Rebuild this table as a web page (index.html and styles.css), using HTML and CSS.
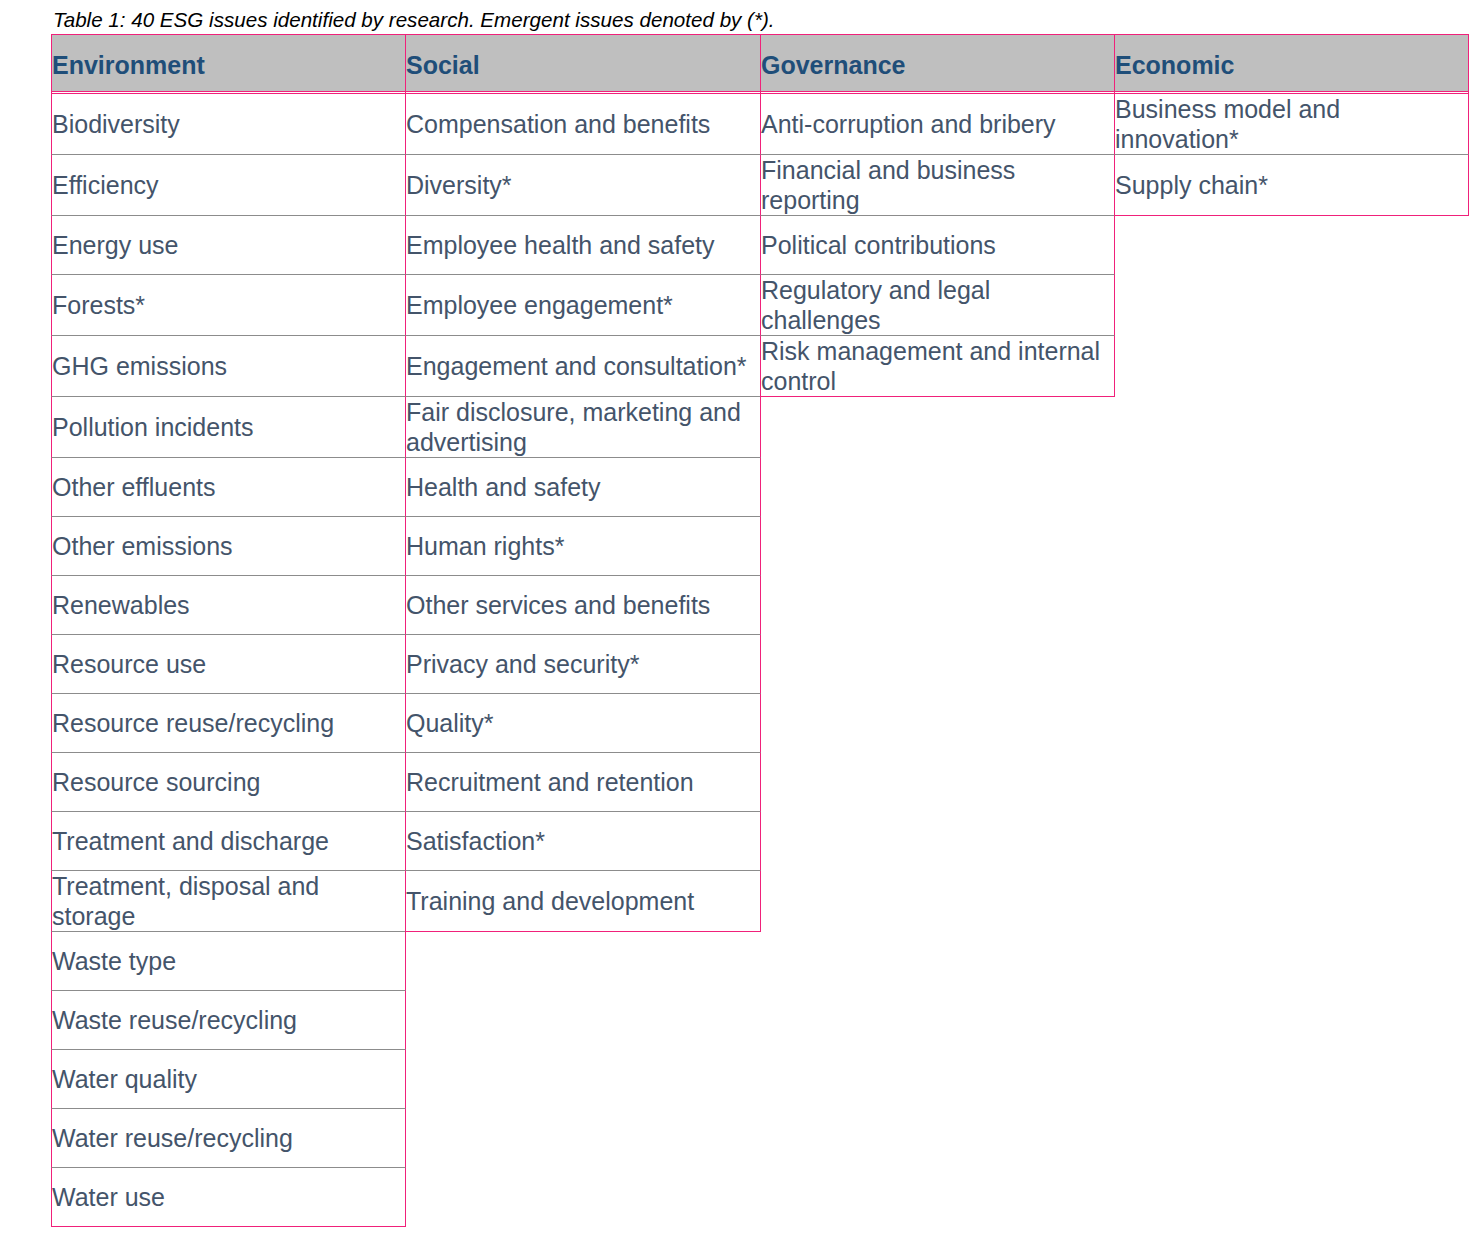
FILE: index.html
```html
<!DOCTYPE html>
<html lang="en">
<head>
<meta charset="utf-8">
<title>ESG issues</title>
<link rel="stylesheet" href="styles.css">
</head>
<body>
<div class="page">
  <p class="caption">Table 1: 40 ESG issues identified by research. Emergent issues denoted by (*).</p>
  <div class="esg">
    <div class="cell head c1">Environment</div>
    <div class="cell c1">Biodiversity</div>
    <div class="cell c1">Efficiency</div>
    <div class="cell c1">Energy use</div>
    <div class="cell c1">Forests*</div>
    <div class="cell c1">GHG emissions</div>
    <div class="cell c1">Pollution incidents</div>
    <div class="cell c1">Other effluents</div>
    <div class="cell c1">Other emissions</div>
    <div class="cell c1">Renewables</div>
    <div class="cell c1">Resource use</div>
    <div class="cell c1">Resource reuse/recycling</div>
    <div class="cell c1">Resource sourcing</div>
    <div class="cell c1">Treatment and discharge</div>
    <div class="cell c1">Treatment, disposal and storage</div>
    <div class="cell c1">Waste type</div>
    <div class="cell c1">Waste reuse/recycling</div>
    <div class="cell c1">Water quality</div>
    <div class="cell c1">Water reuse/recycling</div>
    <div class="cell c1 last">Water use</div>

    <div class="cell head c2">Social</div>
    <div class="cell c2">Compensation and benefits</div>
    <div class="cell c2">Diversity*</div>
    <div class="cell c2">Employee health and safety</div>
    <div class="cell c2">Employee engagement*</div>
    <div class="cell c2">Engagement and consultation*</div>
    <div class="cell c2">Fair disclosure, marketing and advertising</div>
    <div class="cell c2">Health and safety</div>
    <div class="cell c2">Human rights*</div>
    <div class="cell c2">Other services and benefits</div>
    <div class="cell c2">Privacy and security*</div>
    <div class="cell c2">Quality*</div>
    <div class="cell c2">Recruitment and retention</div>
    <div class="cell c2">Satisfaction*</div>
    <div class="cell c2 last">Training and development</div>

    <div class="cell head c3">Governance</div>
    <div class="cell c3">Anti-corruption and bribery</div>
    <div class="cell c3">Financial and business reporting</div>
    <div class="cell c3">Political contributions</div>
    <div class="cell c3">Regulatory and legal challenges</div>
    <div class="cell c3 last">Risk management and internal control</div>

    <div class="cell head c4">Economic</div>
    <div class="cell c4">Business model and innovation*</div>
    <div class="cell c4 last">Supply chain*</div>
  </div>
</div>
</body>
</html>
```

FILE: styles.css
```css
html, body {
  margin: 0;
  padding: 0;
  background: #ffffff;
}

.page {
  padding: 0 0 20px 51px;
  font-family: "Liberation Sans", Arial, sans-serif;
}

.caption {
  margin: 0;
  padding: 9px 0 3px 2px;
  height: 22px;
  font-size: 20.6px;
  line-height: 22px;
  font-style: italic;
  color: #000000;
  white-space: nowrap;
}

.esg {
  display: grid;
  grid-template-columns: 354px 355px 354px 354px;
  grid-auto-flow: row dense;
  align-items: stretch;
}

.c1 { grid-column: 1; }
.c2 { grid-column: 2; }
.c3 { grid-column: 3; }
.c4 { grid-column: 4; }

.cell {
  margin-right: -1px;
  display: flex;
  align-items: center;
  min-height: 58px;
  padding: 0 8px 0 0;
  border-left: 1px solid #f0217a;
  border-right: 1px solid #f0217a;
  border-bottom: 1px solid #8c8c8c;
  font-size: 25px;
  line-height: 30px;
  color: #44546a;
}

.cell.last {
  border-bottom-color: #f0217a;
}

.cell.head {
  box-sizing: border-box;
  height: 60px;
  min-height: 0;
  padding-top: 4px;
  background: #bfbfbf;
  background-clip: padding-box;
  border-top: 1px solid #f0217a;
  border-bottom: 3px double #f0217a;
  font-weight: bold;
  color: #1f4e79;
}
```
